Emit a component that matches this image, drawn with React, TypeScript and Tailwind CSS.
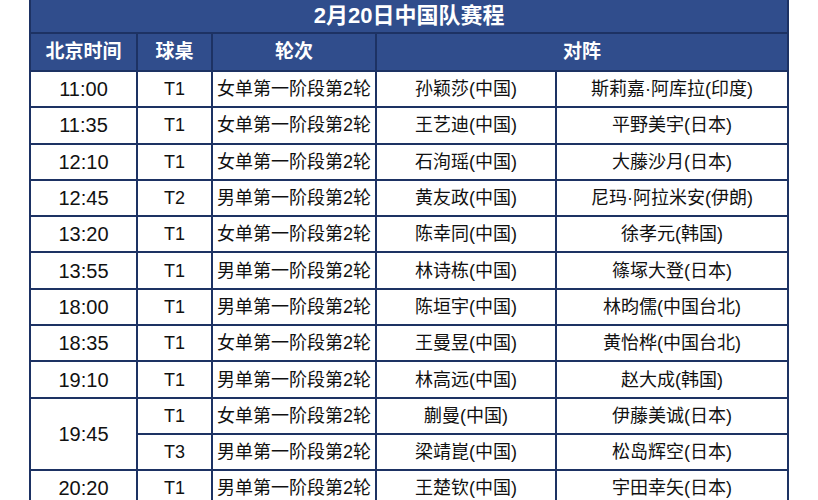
import React from 'react';

type Match = {
  time?: string;
  span?: number;
  table: string;
  round: string;
  player: string;
  opponent: string;
};

const WOMEN = '女单第一阶段第2轮';
const MEN = '男单第一阶段第2轮';

const matches: Match[] = [
  { time: '11:00', table: 'T1', round: WOMEN, player: '孙颖莎(中国)', opponent: '斯莉嘉·阿库拉(印度)' },
  { time: '11:35', table: 'T1', round: WOMEN, player: '王艺迪(中国)', opponent: '平野美宇(日本)' },
  { time: '12:10', table: 'T1', round: WOMEN, player: '石洵瑶(中国)', opponent: '大藤沙月(日本)' },
  { time: '12:45', table: 'T2', round: MEN, player: '黄友政(中国)', opponent: '尼玛·阿拉米安(伊朗)' },
  { time: '13:20', table: 'T1', round: WOMEN, player: '陈幸同(中国)', opponent: '徐孝元(韩国)' },
  { time: '13:55', table: 'T1', round: MEN, player: '林诗栋(中国)', opponent: '篠塚大登(日本)' },
  { time: '18:00', table: 'T1', round: MEN, player: '陈垣宇(中国)', opponent: '林昀儒(中国台北)' },
  { time: '18:35', table: 'T1', round: WOMEN, player: '王曼昱(中国)', opponent: '黄怡桦(中国台北)' },
  { time: '19:10', table: 'T1', round: MEN, player: '林高远(中国)', opponent: '赵大成(韩国)' },
  { time: '19:45', span: 2, table: 'T1', round: WOMEN, player: '蒯曼(中国)', opponent: '伊藤美诚(日本)' },
  { table: 'T3', round: MEN, player: '梁靖崑(中国)', opponent: '松岛辉空(日本)' },
  { time: '20:20', table: 'T1', round: MEN, player: '王楚钦(中国)', opponent: '宇田幸矢(日本)' },
];

const font = { fontFamily: '"Liberation Sans", "Noto Sans CJK SC", sans-serif' };

export default function App() {
  return (
    <div className="w-[818px] h-[500px] overflow-hidden bg-white" style={font}>
      <div className="pl-[29px] -mt-[2px]">
        <table className="table-fixed border-collapse w-[758px] text-[#111]">
          <colgroup>
            <col className="w-[107px]" />
            <col className="w-[75px]" />
            <col className="w-[164px]" />
            <col className="w-[180px]" />
            <col className="w-[232px]" />
          </colgroup>
          <thead>
            <tr>
              <th
                colSpan={5}
                className="h-[34px] bg-[#304d8c] border-2 border-[#1d3263] text-white text-[22px] font-bold text-center leading-none"
              >
                2月20日中国队赛程
              </th>
            </tr>
            <tr className="bg-[#304d8c] text-white text-[19px] font-bold">
              <th className="h-[38px] border-2 border-[#1d3263] text-center">北京时间</th>
              <th className="border-2 border-[#1d3263] text-center">球桌</th>
              <th className="border-2 border-[#1d3263] text-center">轮次</th>
              <th colSpan={2} className="border-2 border-[#1d3263] text-center">对阵</th>
            </tr>
          </thead>
          <tbody>
            {matches.map((m, i) => (
              <tr key={i} className="h-[36.3px]">
                {m.time && (
                  <td
                    rowSpan={m.span ?? 1}
                    className="border-2 border-[#1d3263] text-center text-[20px] leading-none"
                  >
                    {m.time}
                  </td>
                )}
                <td className="border-2 border-[#1d3263] text-center text-[18px] leading-none">{m.table}</td>
                <td className="border-2 border-[#1d3263] text-center text-[18px] leading-none whitespace-nowrap">{m.round}</td>
                <td className="border-2 border-[#1d3263] text-center text-[18px] leading-none whitespace-nowrap">{m.player}</td>
                <td className="border-2 border-[#1d3263] text-center text-[18px] leading-none whitespace-nowrap">{m.opponent}</td>
              </tr>
            ))}
          </tbody>
        </table>
      </div>
    </div>
  );
}
